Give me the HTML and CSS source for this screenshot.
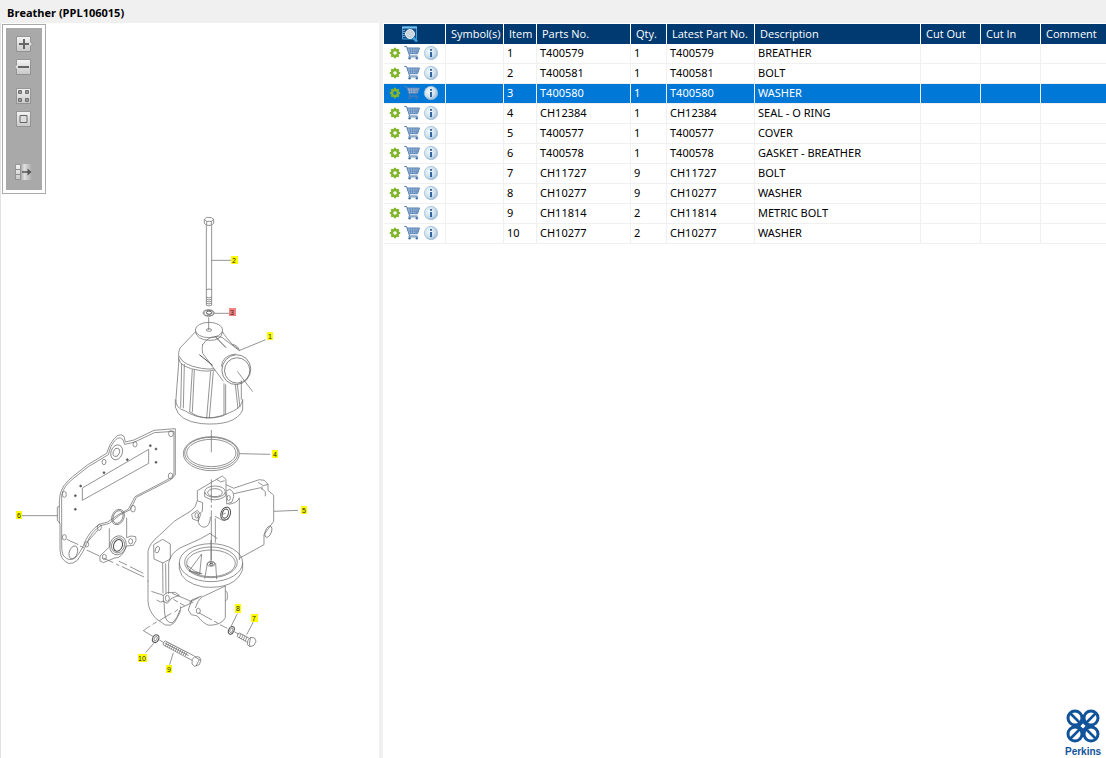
FILE: index.html
```html
<!DOCTYPE html>
<html lang="en">
<head>
<meta charset="utf-8">
<title>Breather (PPL106015)</title>
<link rel="stylesheet" href="styles.css">
</head>
<body>
<svg class="defs" aria-hidden="true">
  <defs>
    <linearGradient id="btn" x1="0" y1="0" x2="0" y2="1"><stop offset="0" stop-color="#f4f4f4"/><stop offset="1" stop-color="#c8c8c8"/></linearGradient>
    <linearGradient id="fade"><stop offset="0" stop-color="#a8a8a8"/><stop offset=".3" stop-color="#e0e0e0"/><stop offset="1" stop-color="#a8a8a8"/></linearGradient>
    <radialGradient id="ball" cx=".4" cy=".4" r=".65"><stop offset="0" stop-color="#f4f9fc"/><stop offset=".6" stop-color="#cfe0ec"/><stop offset="1" stop-color="#8fb4d2"/></radialGradient>
  </defs>
  <symbol id="gear" viewBox="0 0 12 12">
    <circle cx="6" cy="6" r="3" fill="none" stroke="#82b52c" stroke-width="2.4"/>
    <g stroke="#82b52c" stroke-width="2.2"><path d="M6 .8v2M6 9.2v2M.8 6h2M9.2 6h2M2.3 2.3l1.5 1.5M8.2 8.2l1.5 1.5M9.7 2.3 8.2 3.8M3.8 8.2 2.3 9.7"/></g>
  </symbol>
  <symbol id="cart" viewBox="0 0 16 16">
    <path d="M3 3h12.5l-2 5.600H5.3z" fill="#b4cae3"/>
    <path d="M.3 1.500h2.200L5.600 11h7.800M3 3h12.500L13.500 8.700H5" fill="none" stroke="#5580b4"/>
    <path d="M3.800 5h11M4.400 6.800h9.800M6 3l.8 5.600M8.600 3v5.600M11 3v5.600M13.400 3l-1 5.600M5.500 10.800l-.8 1.200h9.600" fill="none" stroke="#5580b4" stroke-width=".7"/>
    <circle cx="5.600" cy="13.300" r="1.200" fill="#4674ac"/><circle cx="12.800" cy="13.300" r="1.200" fill="#4674ac"/>
  </symbol>
  <symbol id="info" viewBox="0 0 16 16">
    <circle cx="8" cy="8" r="6.7" fill="url(#ball)" stroke="#9fbfda" stroke-width=".7"/>
    <path d="M7 4h2v1.800H7zM7 7h2v5H7z" fill="#2f669e"/>
  </symbol>
</svg>

<h1 class="title">Breather (PPL106015)</h1>
<main class="workspace">
  <section class="viewer" aria-label="Parts drawing">
    <svg class="drawing" viewBox="1 23 378 735" preserveAspectRatio="xMinYMin meet" role="img" aria-label="Exploded view of breather assembly">
      <!-- bolt 2 and washer 3 -->
      <g class="ink" transform="translate(160 210) scale(.3333)">
        <path d="M133 28l7-6 14 1 7 5v12l-7 6h-14l-7-6zM133 28l7 6h14l7-6M140 34v12M154 34v12M139 47V261M155 47V261M139 239q8-4 16 0M139 261q8 6 16 0M139 267q8 6 16 0M139 273q8 6 16 0M139 279q8 6 16 0M139 285q8 6 16 0M139 261v25M155 261v25"/>
        <ellipse cx="146" cy="309" rx="17" ry="10"/><ellipse cx="146" cy="309" rx="14" ry="8"/><ellipse class="bold" cx="147" cy="308" rx="8" ry="5"/>
        <path d="M155 151h58M163 310h44"/>
      </g>
      <!-- breather body 1 -->
      <g class="ink" transform="translate(160 310) scale(.3333)">
        <ellipse cx="147" cy="60" rx="41" ry="23"/><path d="M106 64q4 25 41 27t41-27"/>
        <ellipse cx="147" cy="60" rx="8" ry="4"/><path d="M146 22v38"/>
        <path d="M106 66L60 114q-6 12-4 31q2 28 66 37q20 4 44-2M58 139q10 27 66 36q22 4 38 1M56 145v16M188 66q8 14 29 37q7 8 20 14M128 102q-3 14 0 28M128 104q20-32 58-22M186 82l52 40M128 130l62 84"/>
        <path class="bold" d="M118 134l40 32M166 80l32 33"/>
        <ellipse cx="229" cy="179" rx="43" ry="45" transform="rotate(20 229 179)"/><ellipse cx="232" cy="181" rx="38" ry="38" transform="rotate(20 231 180)"/>
        <path d="M184 170q3-34 43-38M232 184l46 61M237 122l80-33M217 103q17 3 21 18"/>
        <path d="M56 161l-8 105M65 160l-3 133M73 162l-3 133M97 178l-8 128M103 179l-6 128M152 184l-12 140M160 184l-12 140M192 220v97M197 223v92M226 224l8 72M232 223l8 69M244 211v58M48 266q-4 28 28 37q62 41 144 0q25-12 28-34M46 268v23q10 42 78 50q102 8 124-41v-32M89 306q45 30 102 11"/>
      </g>
      <!-- o-ring 4 and cover 5 -->
      <g class="ink" transform="translate(170 425) scale(.3333)">
        <ellipse cx="124" cy="86" rx="84" ry="51"/><ellipse cx="124" cy="84" rx="80" ry="47"/><ellipse cx="124" cy="84" rx="74" ry="41"/>
        <path d="M124 15v67M124 163v70M124 240v8M124 256v150M208 86l92 2M312 259l72-3"/>
        <path d="M82 197l75-44 11 10v16l22 10M190 190l78-26 15 2 11 12v18l17 15v78l-29 40v30l-74 41M82 197v30M140 163l12 8 12-4M192 206l80-18 14 12v14M264 172l16 10 14-4M276 184v10"/>
        <ellipse cx="135" cy="200" rx="31" ry="17"/><ellipse cx="135" cy="203" rx="22" ry="12"/><path d="M104 201v14q30 20 62-1v-12M168 179v20l10-6q14 5 13 22l-5 16-16 6v-36M208 220v185M176 238q28-4 32-20"/>
        <ellipse cx="176" cy="219" rx="5" ry="8"/>
        <g class="bold"><ellipse cx="167" cy="266" rx="14" ry="20" transform="rotate(18 167 266)"/><ellipse cx="166" cy="266" rx="9" ry="14" transform="rotate(18 166 266)"/></g><path d="M135 274l23 12 18-4M155 270l12-6M136 280v73"/>
        <path d="M82 227l16 6-1 26-12 10v24q8 18 24 12 12-8 12-30M82 227q-4 20-18 30L14 288-32 331q-30 24-34 48v91M65 268l17-12 10 12-7 20-17-6z"/><ellipse cx="80" cy="271" rx="5" ry="8"/>
        <ellipse cx="295" cy="320" rx="9" ry="18" transform="rotate(22 295 320)"/>
      </g>
      <!-- gasket 6 -->
      <g class="ink" transform="translate(50 420) scale(.3333)">
        <path d="M30 225q6-30 38-55l44-35 58-35 10-26q24-42 42-25l4 17 26-6 60-29 64-5v139q-10 14-25 20l-92 47-18 37-30 15-33 26-26 7q-28 18-42 54-10 26-28 50-26 22-45-6-8-12-7-40v-62l-2-7v-60z"/>
        <path d="M35 226q5-28 37-52l43-34 60-36 8-25q20-38 36-20l5 14 28-6 61-29 59-4v130q-10 12-23 17l-94 49-20 38-30 16-32 22-25 7q-27 18-42 50-14 36-32 52-20 11-35-10-5-12-4-38v-63z"/>
        <path d="M22 262l8-4M22 262v40l8 7M-84 287H22"/>
        <path d="M97 204L296 88v42L97 241z"/>
        <ellipse cx="200" cy="97" rx="17" ry="23" transform="rotate(20 200 97)"/><ellipse cx="199" cy="97" rx="9" ry="13" transform="rotate(20 199 97)"/>
        <ellipse cx="204" cy="291" rx="18" ry="24" transform="rotate(25 204 291)"/><ellipse cx="204" cy="291" rx="14" ry="20" transform="rotate(25 204 291)"/>
        <ellipse cx="204" cy="376" rx="24" ry="29" transform="rotate(20 204 376)"/><ellipse cx="204" cy="376" rx="19" ry="23" transform="rotate(20 204 376)"/><ellipse class="bold" cx="204" cy="376" rx="13" ry="18" transform="rotate(20 204 376)"/>
        <ellipse cx="70" cy="397" rx="12" ry="20" transform="rotate(20 70 397)"/>
        <g><ellipse cx="43" cy="223" rx="6" ry="9"/><ellipse cx="162" cy="126" rx="6" ry="8"/><ellipse cx="255" cy="73" rx="6" ry="8"/><ellipse cx="363" cy="41" rx="7" ry="9"/><ellipse cx="362" cy="168" rx="7" ry="9"/><ellipse cx="249" cy="266" rx="7" ry="10"/><ellipse cx="148" cy="322" rx="6" ry="9"/><ellipse cx="110" cy="373" rx="6" ry="8"/><ellipse cx="43" cy="352" rx="6" ry="8"/><ellipse cx="242" cy="364" rx="6" ry="8"/><ellipse cx="163" cy="411" rx="6" ry="8"/></g>
        <g class="dots"><circle cx="92" cy="198" r="3"/><circle cx="76" cy="227" r="3"/><circle cx="76" cy="268" r="3"/><circle cx="162" cy="158" r="3"/><circle cx="232" cy="119" r="3"/><circle cx="301" cy="77" r="3"/><circle cx="318" cy="87" r="3"/><circle cx="318" cy="127" r="3"/></g>
        <path d="M178 325v56l-28 27v15l10 5 34-14q22 2 36-36l20-2 8-14-1-12-14-2-13 5v-60M112 366l32-36M50 358l35 16M90 378l12 5M110 390l38 18M160 414l30 14M198 432l10 5M216 440l66 31M207 424l24 11M240 440l40 20"/>
        <path d="M311 374l27-16 23 14v45l-22 12-27-12z"/><ellipse cx="322" cy="389" rx="6" ry="10" transform="rotate(20 322 389)"/>
      </g>
      <!-- cover base with bolts 7-10 -->
      <g class="ink" transform="translate(130 540) scale(.3333)">
        <ellipse cx="243" cy="68" rx="95" ry="57"/><ellipse cx="243" cy="67" rx="79" ry="46"/><ellipse cx="243" cy="70" rx="73" ry="40"/>
        <path d="M148 68v19q8 42 72 54 96 8 118-52V68M243 0v72M224 116l8-45q11-12 25 0l3 47"/><ellipse cx="243" cy="72" rx="12" ry="7"/><ellipse class="bold" cx="244" cy="73" rx="5" ry="3"/>
        <path d="M215 42l-38 51 32 10 6-61M177 93l40 8M171 76q22 20 44 26M116 68Q122 40 150 24L212-4 240-20 262-4"/>
        <path d="M54 122v60q0 28 24 54l28 19q16 5 28-8l16-30 2-18M98 68l1 92M116 68v94M107 70l1 91M64 154l36 12 12-8 24-1 12 9-26 10M100 166v18l12 6 12-14M80 180l12 6 10-3 2 38q4 30 24 27 14-12 22-38M126 160l60 25"/>
        <ellipse cx="112" cy="175" rx="6" ry="9"/><path d="M214 172L286 138v95q-10 22-48 23-16-3-36-28l-18-4-9-14 10-30 30-12M214 172q-12 12-18 32M178 187l30-15M286 152q8 4 6 12v14l-6 5"/>
        <ellipse cx="205" cy="213" rx="6" ry="8"/>
        <path d="M130 178l14 8M150 190l14 7M206 218l40 22M252 243l12 7M270 254l22 11M314 276l14 7M190 186l-38 18M144 208l-10 8M124 220l-36 22M80 246l-12 7M60 258l-20 14 30 18M88 300l12 7"/>
        <g class="bold"><ellipse cx="304" cy="271" rx="8" ry="12" transform="rotate(25 304 271)"/><ellipse cx="77" cy="296" rx="9" ry="12" transform="rotate(25 77 296)"/></g>
        <ellipse cx="304" cy="271" rx="4" ry="7" transform="rotate(25 304 271)"/><ellipse cx="77" cy="296" rx="4" ry="7" transform="rotate(25 77 296)"/>
        <path d="M328 279l30 16M322 290l30 17M328 279q-8 2-6 11M333 281l-5 13M339 284l-5 13M345 287l-5 13M351 290l-5 13M354 300l8-8 12 2 4 10-6 12-12 4-8-6zM362 292l-4 20M358 312l2 8"/>
        <path d="M106 303l87 45M100 315l86 46M106 303q-9 3-6 12M112 306l-6 12M118 309l-6 12M124 312l-6 12M130 315l-6 12M136 318l-6 12M142 321l-6 12M148 324l-6 12M154 327l-6 12M160 330l-6 12M166 333l-6 12M172 336l-6 12M104 309l72 38M187 358l7-8 14 1 5 9-5 14-14 5-8-7zM194 350l14 9 4 1M208 359l-10 19"/>
        <path d="M304 258l18-37M350 284l20-38M71 310l-24 28M130 338l-11 36"/>
      </g>
      <g class="tags">
        <rect x="231" y="256" width="7" height="8"/><rect class="hot" x="229" y="308" width="7" height="8"/><rect x="267" y="332" width="6" height="8"/><rect x="272" y="450" width="6" height="8"/><rect x="301" y="506" width="6" height="8"/><rect x="16" y="511" width="6" height="8"/><rect x="251" y="614" width="7" height="8"/><rect x="235" y="604" width="6" height="9"/><rect x="166" y="665" width="6" height="8"/><rect x="138" y="654" width="9" height="8"/>
      </g>
      <g class="numbers">
        <text x="234" y="263">2</text><text x="232" y="315">3</text><text x="270" y="339">1</text><text x="275" y="457">4</text><text x="304" y="513">5</text><text x="19" y="518">6</text><text x="254" y="621">7</text><text x="238" y="611">8</text><text x="169" y="672">9</text><text x="142" y="661">10</text>
      </g>
    </svg>
    <div class="toolbar" role="toolbar" aria-label="Drawing tools">
      <button class="tool" aria-label="Zoom in"><svg viewBox="0 0 20 18"><path class="plate" d="M3.500 1.500h14V7l2 2-2 2v5.500h-14z"/><path d="M6 9h10M11 4v10" stroke="#666" stroke-width="2"/></svg></button>
      <button class="tool" aria-label="Zoom out"><svg viewBox="0 0 20 18"><path class="plate" d="M3.500 1.500h14v15h-14V11l-2-2 2-2z"/><path d="M5 9h11" stroke="#666" stroke-width="2"/></svg></button>
      <button class="tool tool-tiles" aria-label="Show overview"><svg viewBox="0 0 20 18"><path class="plate" d="M3.500 1.500h14v15h-14z"/><path d="M5.500 3.500h3v3h-3zM12.500 3.500h3v3h-3zM5.500 11.500h3v3h-3zM12.500 11.500h3v3h-3z" fill="#999" stroke="#707070"/></svg></button>
      <button class="tool" aria-label="Fit to window"><svg viewBox="0 0 20 18"><path class="plate" d="M3.500 1.500h14v15h-14z"/><path d="M7 5.500h7v7H7z" fill="#ddd" stroke="#666"/></svg></button>
      <button class="tool tool-list" aria-label="Toggle parts list"><svg viewBox="0 0 20 18"><path d="M8 1h11v16H8z" fill="url(#fade)"/><path class="plate" d="M2.500 1.500h5v5h-5zM2.500 6.500h5v5h-5zM2.500 11.500h5v5h-5z"/><path d="M9 9h7" stroke="#555" stroke-width="1.500"/><path d="M14.500 5.500 18.500 9l-4 3.500z" fill="#555"/></svg></button>
    </div>
  </section>
  <div class="splitter"></div>
  <section class="list" aria-label="Parts list">
    <table class="parts">
      <colgroup><col class="c-act"><col class="c-sym"><col class="c-item"><col class="c-part"><col class="c-qty"><col class="c-latest"><col class="c-desc"><col class="c-cut"><col class="c-cut"><col></colgroup>
      <thead>
        <tr><th class="find"><button class="icon" aria-label="Search parts"><svg width="18" height="18" viewBox="0 0 18 18"><path d="M1.500 2h14v12h-14z" fill="#174c85" stroke="#3f9fd8"/><path d="M1 2.500h15" stroke="#6fc0ee" stroke-width="2"/><path d="M3 5v8" stroke="#d8ecf8" stroke-dasharray="1 1"/><circle cx="9" cy="9" r="4.500" fill="#c9d6e0" stroke="#e8eef3"/><path d="M12 12.500l4 4" stroke="#3f9fd8" stroke-width="2.500"/></svg></button></th><th>Symbol(s)</th><th>Item</th><th>Parts No.</th><th>Qty.</th><th>Latest Part No.</th><th>Description</th><th>Cut Out</th><th>Cut In</th><th>Comment</th></tr>
      </thead>
      <tbody id="rows"></tbody>
    </table>
    <svg class="brand" viewBox="0 0 42 50" role="img" aria-label="Perkins">
      <g fill="none" stroke="#10539a" stroke-width="3">
        <circle cx="11" cy="10" r="7"/><circle cx="27" cy="10" r="7"/><circle cx="11" cy="26" r="7"/><circle cx="27" cy="26" r="7"/>
        <path d="M6 5l10 10M32 5L22 15M6 31l10-10M32 31L22 21" stroke-width="2.600"/>
        <path d="M15 18l4-4 4 4-4 4z" stroke-width="2"/>
      </g>
      <text x="1" y="47">Perkins</text>
    </svg>
  </section>
</main>
<script src="parts.js"></script>
</body>
</html>
```
FILE: styles.css
```css
* { box-sizing: border-box; }
body {
  margin: 0;
  min-height: 100vh;
  display: flex;
  flex-direction: column;
  background: #f0f0f0;
  color: #000;
  font: 11px/16px "Noto Sans", "Open Sans", sans-serif;
}
.defs { position: absolute; width: 0; height: 0; }
.title {
  margin: 0;
  padding: 5px 7px 2px;
  font: 700 11px/16px "Open Sans", "Noto Sans", sans-serif;
}
.workspace {
  flex: 1;
  display: grid;
  grid-template-columns: 379fr 4px 723fr;
}
.viewer {
  position: relative;
  min-width: 0;
  overflow: hidden;
  background: #fff;
  border-left: 1px solid #e3e3e3;
}
.drawing { display: block; width: 100%; }
.ink { fill: none; stroke: #6c6c6c; stroke-width: 2.2; }
.ink .bold { stroke: #505050; stroke-width: 3; }
.dots { fill: #444; }
.tags { fill: #ff0; }
.tags .hot { fill: #f88080; }
.numbers { font: 7px "Liberation Sans", Arial, sans-serif; text-anchor: middle; fill: #222; }
.toolbar {
  position: absolute;
  top: 1px;
  left: 1px;
  width: 44px;
  padding: 10px 9px 12px;
  display: flex;
  flex-direction: column;
  gap: 5px;
  background: #a9a9a9;
  border: 1px solid #aaa;
  box-shadow: inset 0 0 0 3px #fff;
}
.tool { width: 22px; height: 18px; padding: 0 1px; border: 0; background: none; }
.tool svg { display: block; width: 20px; height: 18px; }
.plate { fill: url(#btn); stroke: #888; stroke-width: 0.8; }
.tool-tiles { margin-top: 6px; }
.tool-list { margin-top: 30px; }
.splitter { background: #f0f0f0; cursor: col-resize; }
.list {
  min-width: 0;
  display: flex;
  flex-direction: column;
  background: #fff;
  padding: 1px 0 0 1px;
}
.parts { width: 100%; table-layout: fixed; border-collapse: separate; border-spacing: 0; }
.c-act { width: 62px; }
.c-sym { width: 58px; }
.c-item { width: 33px; }
.c-part { width: 94px; }
.c-qty { width: 36px; }
.c-latest { width: 88px; }
.c-desc { width: 166px; }
.c-cut { width: 60px; }
.parts th, .parts td {
  height: 20px;
  border-right: 1px solid #f0f0f0;
  text-align: left;
  font-weight: 400;
  white-space: nowrap;
}
.parts th {
  padding: 0 0 0 5px;
  background: #003a70;
  color: #fff;
  border-color: #fff;
  font-family: "Open Sans", "Noto Sans", sans-serif;
  line-height: 18px;
}
.parts td { padding: 0 0 2px 3px; border-bottom: 1px solid #f0f0f0; line-height: 16px; }
.parts th:last-child, .parts td:last-child { border-right: 0; }
.parts .find { padding: 0 0 0 17px; }
.actions { display: flex; align-items: center; gap: 2px; padding-left: 2px; }
.icon { padding: 0; border: 0; background: none; display: block; }
.icon svg { display: block; }
.icon + .icon { margin-left: 1px; }
.picked td { background: #0078d7; color: #fff; }
.brand { width: 42px; height: 50px; margin: auto 0 0 auto; }
.brand text { font: bold 10px "Liberation Sans", Arial, sans-serif; fill: #10539a; }
```
FILE: parts.js
```js
const parts = [
  [1, "T400579", 1, "BREATHER"],
  [2, "T400581", 1, "BOLT"],
  [3, "T400580", 1, "WASHER"],
  [4, "CH12384", 1, "SEAL - O RING"],
  [5, "T400577", 1, "COVER"],
  [6, "T400578", 1, "GASKET - BREATHER"],
  [7, "CH11727", 9, "BOLT"],
  [8, "CH10277", 9, "WASHER"],
  [9, "CH11814", 2, "METRIC BOLT"],
  [10, "CH10277", 2, "WASHER"]
];
const icon = (id, label, size) =>
  `<button class="icon" aria-label="${label}"><svg width="${size}" height="${size}"><use href="#${id}"/></svg></button>`;
document.getElementById("rows").innerHTML = parts.map(([item, no, qty, desc]) => `
  <tr class="${item === 3 ? "picked" : ""}">
    <td><div class="actions">${icon("gear", "Options", 12)}${icon("cart", "Add to cart", 16)}${icon("info", "Details", 16)}</div></td>
    <td></td><td>${item}</td><td>${no}</td><td>${qty}</td><td>${no}</td><td>${desc}</td><td></td><td></td><td></td>
  </tr>`).join("");
```
